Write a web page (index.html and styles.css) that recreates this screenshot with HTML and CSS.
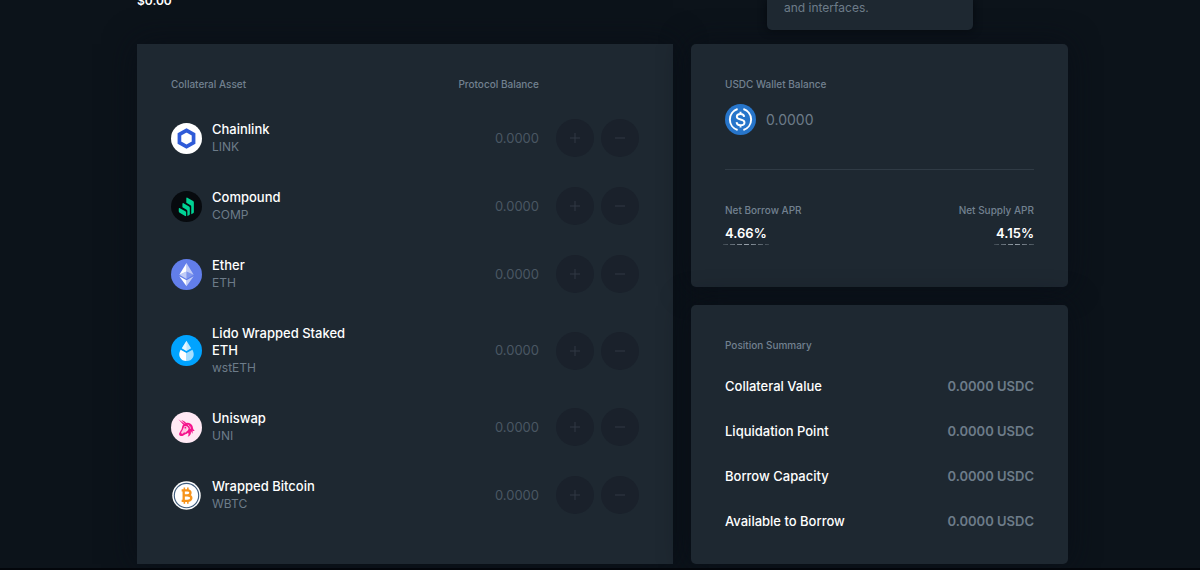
FILE: index.html
```html
<!DOCTYPE html>
<html lang="en">
<head>
<meta charset="utf-8">
<meta name="viewport" content="width=device-width, initial-scale=1">
<title>Dashboard</title>
<link rel="stylesheet" href="styles.css">
</head>
<body>
<header class="masthead">
  <p class="masthead-total">$0.00</p>
  <div class="tip">and interfaces.</div>
</header>
<main class="dashboard">
  <section class="card card-assets">
    <table class="assets">
      <thead>
        <tr><th class="label" scope="col">Collateral Asset</th><th class="label col-balance" scope="col">Protocol Balance</th><td class="col-actions"></td></tr>
      </thead>
      <tbody>
        <tr>
          <td><div class="asset">
            <svg class="coin" viewBox="0 0 32 32" aria-hidden="true"><circle cx="16" cy="16" r="16" fill="#fff"/><path d="M16 7.6l7.3 4.2v8.4L16 24.4l-7.3-4.2v-8.4z" fill="none" stroke="#2f5bd8" stroke-width="3.8"/></svg>
            <div><div class="asset-name">Chainlink</div><div class="asset-symbol">LINK</div></div></div></td>
          <td class="col-balance">0.0000</td>
          <td class="col-actions"><div class="actions"><button class="round" aria-label="Supply Chainlink" disabled><svg class="sign" viewBox="0 0 10 10"><path d="M0 5h10M5 0v10"/></svg></button><button class="round" aria-label="Withdraw Chainlink" disabled><svg class="sign" viewBox="0 0 10 10"><path d="M0 5h10"/></svg></button></div></td>
        </tr>
        <tr>
          <td><div class="asset">
            <svg class="coin" viewBox="0 0 32 32" aria-hidden="true"><circle cx="16" cy="16" r="16" fill="#070a0e"/><g fill="#00d395"><path d="M8 18.3c0-.7.6-1 1.2-.6l5.6 3.2c.5.3.8.8.8 1.3v3.2c0 .6-.5.8-1 .5l-5.7-3.4c-.6-.4-.9-.9-.9-1.5z"/><path d="M11.8 13.3c0-.7.5-1 1.1-.7l5.7 3.4c.5.3.8.8.8 1.4v6.6c0 .5-.3.8-.8 1l-1.7.8v-5c0-.6-.3-1.1-.8-1.4l-4.3-2.6z"/><path d="M15.8 7.6c0-.7.5-1 1.1-.6l5.9 3.4c.5.3.8.8.8 1.4v10.1c0 .5-.3.8-.7 1l-2 1V16c0-.6-.3-1-.8-1.3l-4.3-2.6z"/></g></svg>
            <div><div class="asset-name">Compound</div><div class="asset-symbol">COMP</div></div></div></td>
          <td class="col-balance">0.0000</td>
          <td class="col-actions"><div class="actions"><button class="round" aria-label="Supply Compound" disabled><svg class="sign" viewBox="0 0 10 10"><path d="M0 5h10M5 0v10"/></svg></button><button class="round" aria-label="Withdraw Compound" disabled><svg class="sign" viewBox="0 0 10 10"><path d="M0 5h10"/></svg></button></div></td>
        </tr>
        <tr>
          <td><div class="asset">
            <svg class="coin" viewBox="0 0 32 32" aria-hidden="true"><circle cx="16" cy="16" r="16" fill="#627eea"/><g fill="#fff"><path d="M16 4v8.9l7.4 3.3z" opacity=".6"/><path d="M16 4L8.6 16.2l7.4-3.3z"/><path d="M16 22v6l7.4-10.3z" opacity=".6"/><path d="M16 28v-6l-7.4-4.3z"/><path d="M16 20.6l7.4-4.4-7.4-3.3z" opacity=".2"/><path d="M8.6 16.2l7.4 4.4v-7.7z" opacity=".6"/></g></svg>
            <div><div class="asset-name">Ether</div><div class="asset-symbol">ETH</div></div></div></td>
          <td class="col-balance">0.0000</td>
          <td class="col-actions"><div class="actions"><button class="round" aria-label="Supply Ether" disabled><svg class="sign" viewBox="0 0 10 10"><path d="M0 5h10M5 0v10"/></svg></button><button class="round" aria-label="Withdraw Ether" disabled><svg class="sign" viewBox="0 0 10 10"><path d="M0 5h10"/></svg></button></div></td>
        </tr>
        <tr class="row-tall">
          <td><div class="asset">
            <svg class="coin" viewBox="0 0 32 32" aria-hidden="true"><circle cx="16" cy="16" r="16" fill="#00a3ff"/><g fill="#fff"><path d="M16 6l4.8 7.6-4.8 2.9-4.8-2.9z" opacity=".75"/><path d="M16 6v10.5l-4.8-2.9z" opacity=".6"/><path d="M9.9 15.1l6.1 3.4v8.3c-6 0-9.6-5.7-6.1-11.7z"/><path d="M22.1 15.1L16 18.5v8.3c6 0 9.6-5.7 6.1-11.7z" opacity=".65"/></g></svg>
            <div><div class="asset-name">Lido Wrapped Staked ETH</div><div class="asset-symbol">wstETH</div></div></div></td>
          <td class="col-balance">0.0000</td>
          <td class="col-actions"><div class="actions"><button class="round" aria-label="Supply wstETH" disabled><svg class="sign" viewBox="0 0 10 10"><path d="M0 5h10M5 0v10"/></svg></button><button class="round" aria-label="Withdraw wstETH" disabled><svg class="sign" viewBox="0 0 10 10"><path d="M0 5h10"/></svg></button></div></td>
        </tr>
        <tr>
          <td><div class="asset">
            <svg class="coin" viewBox="0 0 32 32" aria-hidden="true"><circle cx="16" cy="16" r="16" fill="#ffe9f4"/><path d="M13 12.4c3.4-.6 5 2.4 4.2 4.8-.6 1.7-2.4 2.5-2.6 4.1-1.4.9-2.8 1.9-4.4.8-1.8-1.3-.6-3 .6-4.6 1.2-1.5.7-3.6 2.2-5.1z" fill="#ffc3e0"/><g fill="#f5148c"><path d="M7.6 7.6l6 4.3-.9 1.2z"/><path d="M10.8 8.6c1.8.4 3.4 1.2 4.6 2.5l-1 .9z"/><path d="M13 12.3c4-2.3 8.1-.8 9.2 2.2.7 2 .4 3.6 2.3 5-1.1.3-1.8 0-2.3-.5.4 1.5.2 2.5-.4 3.4-.2-1.2-.6-2-1.3-2.6.5 2.9-.7 4.9-3.3 5.8 1.1-1.6 1.3-2.9.4-4.1-1.1 1.3-2.5 1.4-3.6 1.9-1.5.7-2 1.7-3.8 1.4-1.5-.2-2.2-1.6-1.7-2.9.6-1.6 2.2-3 2.6-4.7.4-1.6.4-3.2 1.9-4.9zm1 2.2c-1.4 1.7-1.2 3.5-2.8 5.3-.8.9-1.1 1.8-.2 2.4 1 .6 2-.5 2.4-1.4l1.3.5c1.1-1.5 3.1-1.8 3.4-4 .2-1.4-1.7-3.5-4.1-2.8z" fill-rule="evenodd"/><circle cx="14.8" cy="16.2" r=".9"/></g><path d="M17.4 13.3c1.8.9 2.6 2.4 2.6 4" fill="none" stroke="#ffe9f4" stroke-width=".8"/></svg>
            <div><div class="asset-name">Uniswap</div><div class="asset-symbol">UNI</div></div></div></td>
          <td class="col-balance">0.0000</td>
          <td class="col-actions"><div class="actions"><button class="round" aria-label="Supply Uniswap" disabled><svg class="sign" viewBox="0 0 10 10"><path d="M0 5h10M5 0v10"/></svg></button><button class="round" aria-label="Withdraw Uniswap" disabled><svg class="sign" viewBox="0 0 10 10"><path d="M0 5h10"/></svg></button></div></td>
        </tr>
        <tr>
          <td><div class="asset">
            <svg class="coin" viewBox="0 0 32 32" aria-hidden="true"><circle cx="16" cy="16" r="14.7" fill="#fff"/><circle cx="16" cy="16" r="12.6" fill="none" stroke="#415d7d" stroke-width="1.2"/><g fill="none" stroke="#f7931a" stroke-width="2.4"><path d="M13.1 10.8v11M11 10.7h5.8c4.4 0 4.4 5.1 0 5.1h-3.7M16.8 15.8c5.6 0 5.6 5.8 0 5.8H11"/><path d="M13.8 7.8v3M17.4 7.8v3M13.8 21.6v3M17.4 21.6v3" stroke-width="1.6"/></g></svg>
            <div><div class="asset-name">Wrapped Bitcoin</div><div class="asset-symbol">WBTC</div></div></div></td>
          <td class="col-balance">0.0000</td>
          <td class="col-actions"><div class="actions"><button class="round" aria-label="Supply Wrapped Bitcoin" disabled><svg class="sign" viewBox="0 0 10 10"><path d="M0 5h10M5 0v10"/></svg></button><button class="round" aria-label="Withdraw Wrapped Bitcoin" disabled><svg class="sign" viewBox="0 0 10 10"><path d="M0 5h10"/></svg></button></div></td>
        </tr>
      </tbody>
    </table>
  </section>
  <div class="side">
    <section class="card">
      <h2 class="label">USDC Wallet Balance</h2>
      <div class="wallet">
        <svg class="coin" viewBox="0 0 32 32" aria-hidden="true"><circle cx="16" cy="16" r="16" fill="#2775ca"/><g fill="none" stroke="#fff" stroke-width="2"><path d="M13 5.2a11.3 11.3 0 0 0 0 21.6M19 5.2a11.3 11.3 0 0 1 0 21.6"/><path d="M19.8 13.2c-.2-1.8-1.6-2.9-3.8-2.9-2.3 0-3.8 1-3.8 2.8 0 4 7.9 1.8 7.9 5.9 0 1.8-1.6 2.9-4 2.9-2.5 0-4-1.2-4.1-3.2M16 8v2.6M16 21.6v2.7"/></g></svg>
        <span class="wallet-amount">0.0000</span>
      </div>
      <div class="rates">
        <div><h3 class="label">Net Borrow APR</h3><div class="rate">4.66%</div></div>
        <div class="rate-end"><h3 class="label">Net Supply APR</h3><div class="rate">4.15%</div></div>
      </div>
    </section>
    <section class="card card-summary">
      <h2 class="label">Position Summary</h2>
      <dl class="summary">
        <div class="summary-row"><dt>Collateral Value</dt><dd>0.0000 USDC</dd></div>
        <div class="summary-row"><dt>Liquidation Point</dt><dd>0.0000 USDC</dd></div>
        <div class="summary-row"><dt>Borrow Capacity</dt><dd>0.0000 USDC</dd></div>
        <div class="summary-row"><dt>Available to Borrow</dt><dd>0.0000 USDC</dd></div>
      </dl>
    </section>
  </div>
</main>
</body>
</html>
```
FILE: styles.css
```css
* { box-sizing: border-box; }
body {
  margin: 0;
  padding: 0 132px 0 137px;
  min-height: 100vh;
  background: #0c131a;
  border-bottom: 2px solid #03060b;
  color: #fff;
  font: 400 13px/17px Inter, "Liberation Sans", sans-serif;
}
h2, h3, p, dl, dd { margin: 0; }

.masthead {
  position: relative;
  display: flex;
  align-items: flex-end;
  height: 44px;
  padding-bottom: 35px;
}
.masthead-total { font-size: 12px; font-weight: 600; line-height: 16px; }
.tip {
  position: absolute;
  top: 0;
  right: 95px;
  width: 206px;
  padding: 0 17px 14px;
  border-radius: 0 0 5px 5px;
  background: #1e2831;
  box-shadow: 0 0 8px #05090f;
  color: #6d7c89;
  font-size: 12px;
  line-height: 16px;
}

.dashboard {
  display: grid;
  grid-template-columns: 536fr 377fr;
  gap: 18px;
}
.side { display: flex; flex-direction: column; gap: 18px; }
.card {
  padding: 34px;
  border-radius: 5px;
  background: #1e2831;
  box-shadow: 0 0 30px rgba(9, 14, 23, .8);
}
.card-assets { border-radius: 0; }
.card-summary { flex: 1; padding-bottom: 20px; }
.label {
  color: #728190;
  font-size: 10px;
  font-weight: 500;
  line-height: 12px;
  text-align: left;
}

.assets { width: 100%; border-collapse: collapse; }
.assets th { padding: 0 0 14px; vertical-align: top; }
.assets td { padding: 0; }
.assets tbody tr { height: 68px; }
.assets .row-tall { height: 85px; }
.assets .col-balance { width: 120px; text-align: right; }
.assets td.col-balance { color: #4a5763; }
.col-actions { width: 100px; }
.asset { display: flex; align-items: center; gap: 10px; max-width: 180px; }
.asset-name { font-weight: 500; }
.asset-symbol { color: #6d7c89; font-size: 12px; }
.coin { flex: none; width: 31px; height: 31px; }
.actions { display: flex; justify-content: flex-end; gap: 7px; }
.round {
  display: grid;
  place-items: center;
  width: 38px;
  height: 38px;
  padding: 0;
  border: 0;
  border-radius: 50%;
  background: #1a212b;
}
.sign { width: 10px; height: 10px; fill: none; stroke: #303944; stroke-width: 1; }

.wallet {
  display: flex;
  align-items: center;
  gap: 10px;
  margin-top: 14px;
  padding-bottom: 34px;
  border-bottom: 1px solid #303b45;
}
.wallet-amount { color: #6d7c89; font-size: 14px; }
.rates { display: flex; justify-content: space-between; padding-top: 34px; }
.rate-end { display: flex; flex-direction: column; align-items: flex-end; }
.rate {
  position: relative;
  width: max-content;
  margin-top: 8px;
  padding-bottom: 11px;
  font-size: 13px;
  font-weight: 600;
  line-height: 18px;
}
.rate::after {
  content: "";
  position: absolute;
  top: 20px;
  left: -2px;
  right: -2px;
  height: 1px;
  background: repeating-linear-gradient(90deg, #9aa4ad 0 5px, transparent 5px 7px);
  mask-image: linear-gradient(90deg, rgba(0, 0, 0, .25), #000 50%, rgba(0, 0, 0, .25));
}

.summary { margin-top: 13px; }
.summary-row {
  display: flex;
  align-items: center;
  justify-content: space-between;
  height: 45px;
}
.summary-row dt { font-weight: 500; }
.summary-row dd { color: #6d7c89; font-weight: 600; }
```
